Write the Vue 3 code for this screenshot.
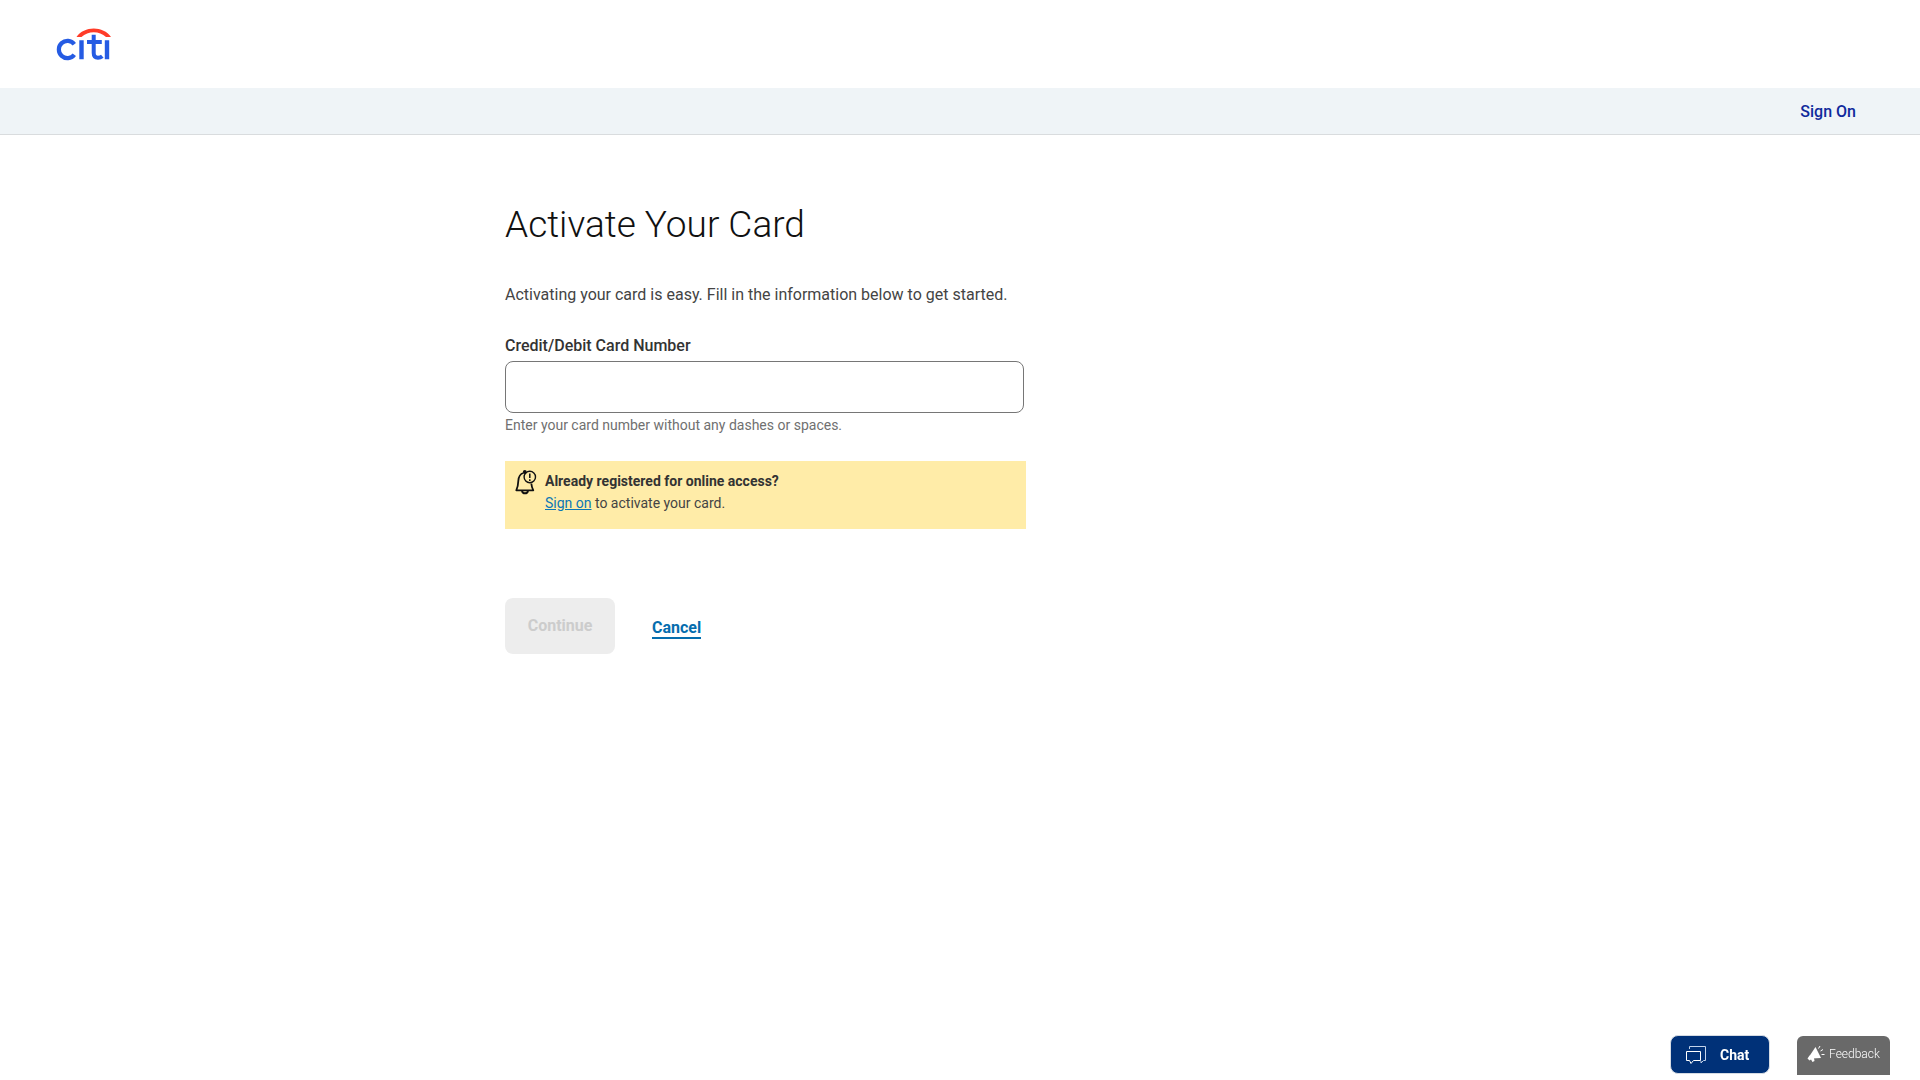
<template>
  <div class="page">
    <header class="page-header">
      <a href="#" class="logo" aria-label="Citi">
        <svg width="56" height="34" viewBox="0 0 56 34" fill="none">
          <path d="M20.5 10C28-1.500 47.500-1.500 55 10H50C43.500 3.500 32 3.500 25.500 10z" fill="#ff3c28"/>
          <path d="M18.300 17.300A8.600 8.600 0 1 0 18.300 27.700" stroke="#255be3" stroke-width="4.200"/>
          <path d="M25.500 13.300V32.200M51 13.300V32.200" stroke="#255be3" stroke-width="4.400"/>
          <path d="M37.700 7.800V26Q37.700 30.700 42 30.700Q44.500 30.700 46.300 29.200M31 15h14.800" stroke="#255be3" stroke-width="4"/>
        </svg>
      </a>
    </header>

    <nav class="nav-bar">
      <a href="#" class="nav-link">Sign On</a>
    </nav>

    <main class="content">
      <h1>Activate Your Card</h1>
      <p class="intro">Activating your card is easy. Fill in the information below to get started.</p>

      <form @submit.prevent>
        <div class="field">
          <label for="card-number">Credit/Debit Card Number</label>
          <input
            id="card-number"
            type="text"
            inputmode="numeric"
            v-model="cardNumber"
            aria-describedby="card-hint"
          />
          <span id="card-hint" class="hint">Enter your card number without any dashes or spaces.</span>
        </div>

        <div class="alert">
          <svg class="alert-icon" width="22" height="26" viewBox="0 0 22 26" fill="none">
            <path d="M8.500 3C4.500 4 3.500 7.500 3.300 11C3.200 14.500 2.800 17 1.300 20.300H18.300C16.800 17.500 16.500 15.500 16.300 13.500" stroke="#111" stroke-width="1.800" stroke-linejoin="round"/>
            <path d="M7 21Q7.500 23.300 10 23.300T13 21" stroke="#111" stroke-width="2"/>
            <circle cx="9.800" cy="2" r="1.900" fill="#111"/>
            <circle cx="14.800" cy="7" r="5.700" stroke="#111" stroke-width="1.400"/>
            <path d="M14.800 3.500v4.500M14.800 9.300v1.700" stroke="#111" stroke-width="1.500"/>
          </svg>
          <div class="alert-body">
            <strong>Already registered for online access?</strong>
            <p><a href="#">Sign on</a> to activate your card.</p>
          </div>
        </div>

        <div class="actions">
          <button type="submit" class="btn-continue" :disabled="!canContinue">Continue</button>
          <a href="#" class="btn-cancel">Cancel</a>
        </div>
      </form>
    </main>

    <div class="floating">
      <button type="button" class="btn-chat">
        <svg width="22" height="20" viewBox="0 0 22 20" fill="none">
          <path d="M4.500 4V1.500H20.500V15.500H18.500L16 18V16" stroke="#c3d3ea" stroke-width="1"/>
          <path d="M1.500 6.500H15.500V15.500H8.500L6 18.500L4.500 15.500H1.500z" stroke="#fff" stroke-width="1"/>
        </svg>
        Chat
      </button>
      <button type="button" class="btn-feedback">
        <svg width="18" height="18" viewBox="0 0 18 18" fill="none">
          <path d="M8.500 2L14 13L4.500 13.500L2.500 11z" fill="#fff"/>
          <path d="M2.500 10.500L.5 13.500L2.500 15.500L4 14.500L5.500 17L7.500 16L7 13z" fill="#fff"/>
          <path d="M11.500 3.500L13 1M13.500 6L16 4.500M14.500 9.500h3" stroke="#fff" stroke-width="1"/>
        </svg>
        Feedback
      </button>
    </div>
  </div>
</template>

<script setup>
import { ref, computed } from 'vue'

const cardNumber = ref('')

const canContinue = computed(() => /^\d{15,16}$/.test(cardNumber.value))
</script>

<style>
body {
  margin: 0;
  background: #fff;
}
</style>

<style scoped>
.page {
  min-height: 100vh;
  font-family: Roboto, "Liberation Sans", sans-serif;
  font-size: 16px;
  line-height: 24px;
  color: #333;
}

.page-header {
  display: flex;
  align-items: center;
  height: 88px;
  padding: 0 56px;
}

.logo {
  display: flex;
}

.nav-bar {
  display: flex;
  align-items: center;
  justify-content: flex-end;
  box-sizing: border-box;
  height: 47px;
  padding: 2px 64px 0;
  background: #eff4f7;
  border-bottom: 1px solid #d9dcde;
}

.nav-link {
  color: #0f2a9c;
  font-weight: 500;
  text-decoration: none;
}

.content {
  max-width: 910px;
  margin: 0 auto;
  padding-top: 66px;
}

h1 {
  margin: 0;
  font-size: 37px;
  line-height: 48px;
  font-weight: 300;
  color: #111;
}

.intro {
  margin: 34px 0 0;
  color: #444;
}

.field {
  display: flex;
  flex-direction: column;
  max-width: 519px;
  margin-top: 27px;
}

.field label {
  font-weight: 500;
}

.field input {
  box-sizing: border-box;
  width: 100%;
  height: 52px;
  margin-top: 3px;
  padding: 0 16px;
  border: 1px solid #767676;
  border-radius: 8px;
  background: #fff;
  font: inherit;
  color: inherit;
}

.field input:focus {
  outline: 2px solid #056dae;
}

.hint {
  font-size: 14px;
  color: #707070;
}

.alert {
  display: flex;
  gap: 8px;
  box-sizing: border-box;
  max-width: 521px;
  min-height: 68px;
  margin-top: 24px;
  padding: 9px 10px;
  background: #ffeca8;
  font-size: 14px;
  line-height: 22px;
}

.alert-icon {
  flex: none;
}

.alert p {
  margin: 0;
  color: #444;
}

.alert a {
  color: #0b77b5;
}

.actions {
  display: flex;
  align-items: center;
  gap: 37px;
  margin-top: 69px;
}

.btn-continue {
  min-width: 110px;
  height: 56px;
  padding: 0 20px;
  border: none;
  border-radius: 8px;
  background: #056dae;
  color: #fff;
  font: inherit;
  font-weight: 700;
  cursor: pointer;
}

.btn-continue:disabled {
  background: #ededed;
  color: #ccc;
  cursor: default;
}

.btn-cancel {
  padding-top: 4px;
  border-bottom: 2px solid #056dae;
  color: #056dae;
  line-height: 19px;
  font-weight: 700;
  text-decoration: none;
}

.floating {
  position: fixed;
  right: 30px;
  bottom: 5px;
  display: flex;
  align-items: flex-end;
  gap: 27px;
}

.btn-chat,
.btn-feedback {
  display: flex;
  align-items: center;
  height: 39px;
  border: none;
  color: #fff;
  font-family: inherit;
  cursor: pointer;
}

.btn-chat {
  gap: 13px;
  width: 100px;
  margin-bottom: 1px;
  padding: 0 14px;
  border: 1px solid #d5dbe3;
  border-radius: 8px;
  background: #003178;
  font-size: 14px;
  font-weight: 700;
}

.btn-feedback {
  gap: 4px;
  width: 93px;
  padding: 0 10px 3px;
  border-radius: 6px 6px 0 0;
  background: #696969;
  font-size: 12px;
  font-weight: 300;
}
</style>
